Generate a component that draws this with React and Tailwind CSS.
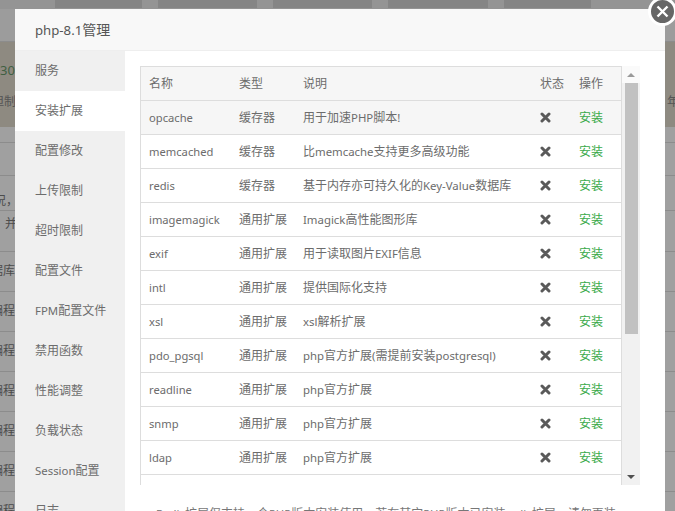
const menu = ["服务","安装扩展","配置修改","上传限制","超时限制","配置文件","FPM配置文件","禁用函数","性能调整","负载状态","Session配置","日志"];
const rows = [
["opcache","缓存器","用于加速PHP脚本!"],
["memcached","缓存器","比memcache支持更多高级功能"],
["redis","缓存器","基于内存亦可持久化的Key-Value数据库"],
["imagemagick","通用扩展","Imagick高性能图形库"],
["exif","通用扩展","用于读取图片EXIF信息"],
["intl","通用扩展","提供国际化支持"],
["xsl","通用扩展","xsl解析扩展"],
["pdo_pgsql","通用扩展","php官方扩展(需提前安装postgresql)"],
["readline","通用扩展","php官方扩展"],
["snmp","通用扩展","php官方扩展"],
["ldap","通用扩展","php官方扩展"],
];
const T = ({ children }) => {
  const parts = String(children).split(/([\x00-\x7f]+)/);
  return <>{parts.map((p, i) => /[\x00-\x7f]/.test(p) ? <span key={i} className="text-[11.4px]">{p}</span> : p)}</>;
};
const X = () => (
  <svg width="11" height="11" viewBox="0 0 11 11" className="block">
    <path d="M2 2 L9 9 M9 2 L2 9" stroke="#5a5a5a" strokeWidth="3" strokeLinecap="round" />
  </svg>
);
const Seg = ({ w }) => <div className={"h-[8px] bg-[#858585] " + w} />;
export default function App() {
  return (
    <div className="relative h-[511px] w-[675px] overflow-hidden bg-[#a0a0a0] text-[12px] text-[#6c6c6c]" style={{fontFamily:'"Noto Sans","Noto Sans CJK SC",sans-serif'}}>
      <div className="flex h-[9px] justify-start gap-[16px] bg-[#949494] pl-[55px]">
        <Seg w="w-[87px]" />
        <Seg w="w-[99px]" />
        <Seg w="w-[99px]" />
        <Seg w="w-[100px]" />
        <Seg w="w-[87px]" />
      </div>
      <div className="h-[33px] border-b border-[#8c8c8c] bg-[#9c9c9c]" />
      <div className="relative h-[85px] bg-[#8e8a81] text-[#555]">
        <div className="pt-[19px] text-[13px] leading-[18px] text-[#3f5f42]">300</div>
        <div className="mt-[14px] flex justify-between leading-[18px]"><span className="-ml-[8px]">但制</span><span className="-mr-[4px]">年</span></div>
      </div>
      <div className="h-[16px] border-b border-[#8c8c8c]" />
      <div className="h-[33px] border-b border-[#8c8c8c]" />
      <div className="h-[35px] border-b border-[#8c8c8c] text-[#4c4c4c]"><span className="-ml-[6px] block leading-[50px]">况，</span></div>
      <div className="h-[41px] border-b border-[#8c8c8c] text-[#4c4c4c]"><span className="ml-[5px] block leading-[26px]">并</span></div>
      {["据库","编程","编程","编程","编程","编程","编程"].map((t,i)=>(
        <div key={i} className="h-[40px] border-b border-[#8c8c8c] text-[#4c4c4c]"><span className="-ml-[9px] block leading-[38px]">{t}</span></div>
      ))}

      <div className="absolute left-[15px] top-[9px] flex h-[520px] w-[650px] flex-col bg-white">
        <div className="h-[42px] border-b border-[#eee] bg-[#f8f8f8] pl-[20px] text-[14px] leading-[42px] text-[#555]"><span className="text-[13.2px]">php-8.1</span>管理</div>
        <div className="flex min-h-0 flex-1">
          <div className="w-[110px] shrink-0 bg-[#f0f0f0]">
            {menu.map((m,i)=>(
              <div key={m} className={"h-[40px] pl-[20px] leading-[40px] text-[#6c6c6c] "+(i===1?"bg-white":"")}><T>{m}</T></div>
            ))}
          </div>
          <div className="min-w-0 flex-1 pl-[15px] pt-[15px]">
            <div className="flex h-[419px] w-[500px]">
              <div className="h-full w-[482px] overflow-hidden border-x border-t border-[#ddd]">
                <div className="flex h-[34px] items-center border-b border-[#ddd] bg-[#f6f6f6] leading-none">
                  <span className="w-[98px] pl-[8px]">名称</span>
                  <span className="w-[64px]">类型</span>
                  <span className="w-[237px]">说明</span>
                  <span className="w-[39px]">状态</span>
                  <span>操作</span>
                </div>
                {rows.map((r,i)=>(
                  <div key={r[0]} className={"flex h-[34px] items-center border-b border-[#ddd] leading-none "+(i===0?"bg-[#f6f6f6]":"")}>
                    <span className="w-[98px] pl-[8px] text-[11.2px]">{r[0]}</span>
                    <span className="w-[64px]">{r[1]}</span>
                    <span className="w-[237px]"><T>{r[2]}</T></span>
                    <span className="-mt-[1px] w-[39px]"><X /></span>
                    <span className="text-[#3aaa4a]">安装</span>
                  </div>
                ))}
              </div>
              <div className="flex w-[18px] flex-col items-center bg-[#f1f1f1]">
                <div className="flex h-[17px] w-full items-center justify-center bg-[#fafafa]"><div className="h-0 w-0 border-x-[4px] border-b-[4px] border-x-transparent border-b-[#9a9a9a]" /></div>
                <div className="h-[251px] w-[13px] bg-[#c1c1c1]" />
                <div className="flex-1" />
                <div className="flex h-[17px] w-full items-center justify-center"><div className="h-0 w-0 border-x-[4px] border-t-[4px] border-x-transparent border-t-[#505050]" /></div>
              </div>
            </div>
            <div className="pl-[16px] pt-[20px] leading-[18px] text-[#777]"><T>Redis扩展仅支持一个PHP版本安装使用，若在其它PHP版本已安装redis扩展，请勿再装</T></div>
          </div>
        </div>
      </div>
      <div className="absolute left-[648px] top-[-3px] flex h-[29px] w-[29px] items-center justify-center rounded-full border-[3px] border-white bg-[#666]">
        <svg width="15" height="15" viewBox="0 0 15 15"><path d="M2.5 2.5 L12.5 12.5 M12.5 2.5 L2.5 12.5" stroke="#fff" strokeWidth="2.4" /></svg>
      </div>
    </div>
  );
}
